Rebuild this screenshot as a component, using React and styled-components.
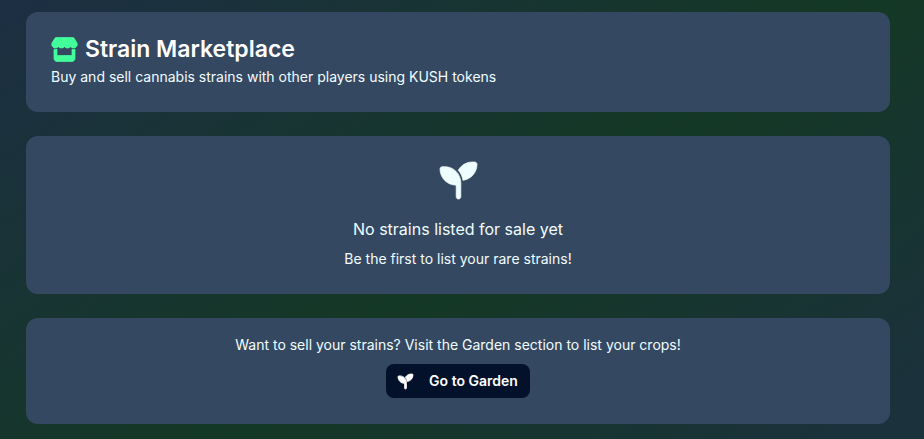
import React from "react";
import styled, { createGlobalStyle } from "styled-components";
import { FaSeedling, FaStore } from "react-icons/fa6";

const GlobalStyle = createGlobalStyle`
  *, *::before, *::after { box-sizing: border-box; }
  body {
    margin: 0;
    font-family: Inter, "Liberation Sans", sans-serif;
    color: #f0fdff;
  }
  h1, p { margin: 0; }
`;

const Page = styled.main`
  display: flex;
  flex-direction: column;
  gap: 24px;
  min-height: 100vh;
  padding: 12px 34px 15px 26px;
  background: linear-gradient(146deg, #1d2f44 0%, #143825 55%, #1b313c 95%);
`;

const Card = styled.section`
  display: flex;
  flex-direction: column;
  align-items: ${({ $centered }) => ($centered ? "center" : "stretch")};
  padding: ${({ $top }) => $top}px 25px 25px;
  border-radius: 12px;
  background: #354862;
`;

const Title = styled.h1`
  display: flex;
  align-items: center;
  gap: 7px;
  margin-bottom: 2px;
  font-size: 23px;
  line-height: 32px;
  font-weight: 600;
  color: #ffffff;
`;

const StoreIcon = styled(FaStore)`
  width: 27px;
  height: 25px;
  color: #43ff9b;
  stroke-width: 16;
`;

const Text = styled.p`
  font-size: 14px;
  line-height: 20px;
`;

const EmptyIcon = styled(FaSeedling)`
  width: 37px;
  height: 37px;
  margin-bottom: 18px;
  overflow: visible;
  stroke-width: 10;
`;

const EmptyTitle = styled.p`
  margin-bottom: 8px;
  font-size: 16px;
  line-height: 24px;
`;

const Button = styled.button`
  display: inline-flex;
  align-items: center;
  gap: 16px;
  height: 34px;
  margin: 9px 0 1px;
  padding: 0 12px;
  border: 0;
  border-radius: 8px;
  background: #03112b;
  color: #ffffff;
  font: 600 14px/20px Inter, "Liberation Sans", sans-serif;
  cursor: pointer;
`;

const ButtonIcon = styled(FaSeedling)`
  width: 15px;
  height: 15px;
  overflow: visible;
  stroke-width: 28;
`;

export default function App() {
  return (
    <>
      <GlobalStyle />
      <Page>
        <Card $top={21}>
          <Title>
            <StoreIcon aria-hidden="true" />
            Strain Marketplace
          </Title>
          <Text>Buy and sell cannabis strains with other players using KUSH tokens</Text>
        </Card>
        <Card $top={26} $centered>
          <EmptyIcon aria-hidden="true" />
          <EmptyTitle>No strains listed for sale yet</EmptyTitle>
          <Text>Be the first to list your rare strains!</Text>
        </Card>
        <Card $top={17} $centered>
          <Text>Want to sell your strains? Visit the Garden section to list your crops!</Text>
          <Button type="button">
            <ButtonIcon aria-hidden="true" />
            Go to Garden
          </Button>
        </Card>
      </Page>
    </>
  );
}
